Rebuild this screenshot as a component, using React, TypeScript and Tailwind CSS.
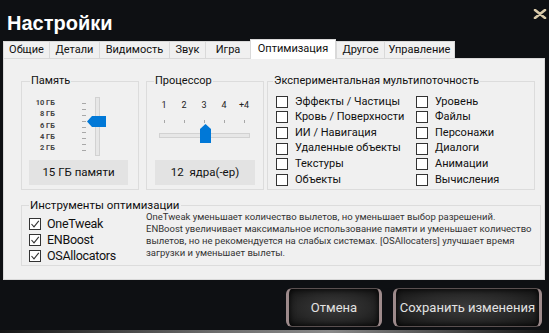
import React from 'react';

const tabs = [
  { label: 'Общие', w: 'w-[46px]' },
  { label: 'Детали', w: 'w-[50px]' },
  { label: 'Видимость', w: 'w-[70px]' },
  { label: 'Звук', w: 'w-[36px]' },
  { label: 'Игра', w: 'w-[45px]' },
  { label: 'Оптимизация', w: 'w-[86px]', active: true },
  { label: 'Другое', w: 'w-[48px]' },
  { label: 'Управление', w: 'w-[71px]' },
];

const leftThreads = ['Эффекты / Частицы', 'Кровь / Поверхности', 'ИИ / Навигация', 'Удаленные объекты', 'Текстуры', 'Объекты'];
const rightThreads = ['Уровень', 'Файлы', 'Персонажи', 'Диалоги', 'Анимации', 'Вычисления'];
const tools = ['OneTweak', 'ENBoost', 'OSAllocators'];

function Box({ checked }: { checked?: boolean }) {
  return (
    <span className="flex h-[12px] w-[12px] shrink-0 items-center justify-center border border-[#333] bg-white">
      {checked && (
        <svg width="10" height="10" viewBox="0 0 10 10">
          <path d="M1.5 5 L4 7.8 L8.8 1.8" fill="none" stroke="#333" strokeWidth="1.1" />
        </svg>
      )}
    </span>
  );
}

function ValueBox({ text }: { text: string }) {
  return (
    <div className="flex h-[25px] items-center justify-center bg-[#e3e3e3] text-[11.5px] text-[#111]">{text}</div>
  );
}

function StoneButton({ label, w }: { label: string; w: string }) {
  return (
    <div
      className={`${w} flex h-[39px] items-center justify-center rounded-[6px] border-x-[3px] border-y border-x-[#9d8a8b] border-y-[#5a5050] bg-[radial-gradient(ellipse_at_center,#3a3a3a_0%,#282828_55%,#141414_100%)] text-[13px] text-[#e2e2e2] shadow-[inset_0_0_6px_#000]`}
    >
      {label}
    </div>
  );
}

export default function App() {
  return (
    <div className="flex h-[333px] w-[549px] flex-col overflow-hidden bg-[#0e1013] font-['Roboto','Liberation_Sans',sans-serif]">
      {/* title */}
      <div className="flex h-[39px] items-start justify-between pl-[7px] pr-[2px]">
        <span className="mt-[10px] font-['Liberation_Sans',Arial,sans-serif] text-[20px] font-bold leading-[26px] text-white">
          Настройки
        </span>
        <svg className="mt-[9px]" width="14" height="10" viewBox="0 0 14 10">
          <path d="M2 1 L12 9 M12 1 L2 9" stroke="#d8c9a9" strokeWidth="2.6" strokeLinecap="round" />
        </svg>
      </div>

      {/* tabs */}
      <div className="flex h-[19px] items-end pl-[3px]">
        {tabs.map((t) =>
          t.active ? (
            <div
              key={t.label}
              className={`${t.w} -mb-px z-10 flex h-[20px] items-center justify-center border-x border-t border-[#d9d9d9] bg-white text-[11px] text-[#111]`}
            >
              {t.label}
            </div>
          ) : (
            <div
              key={t.label}
              className={`${t.w} flex h-[17px] items-center justify-center border-l border-t border-[#d9d9d9] bg-[#f0f0f0] text-[11px] text-[#111] last:border-r`}
            >
              {t.label}
            </div>
          )
        )}
      </div>

      {/* panel */}
      <div className="ml-[3px] h-[222px] w-[542px] border border-[#d9d9d9] bg-[#f0f0f0] pl-[17px] pt-[15px] text-[#111]">
        <div className="flex">
          {/* memory */}
          <fieldset className="h-[116px] w-[118px] border border-[#dcdcdc]">
            <legend className="ml-[8px] px-px text-[11px] leading-[14px]">Память</legend>
            <div className="mt-[9px] flex h-[60px]">
              <div className="ml-[8px] w-[25px] text-right text-[7.5px] font-bold leading-[11.3px] text-[#444]">
                <div>10 ГБ</div>
                <div>8 ГБ</div>
                <div>6 ГБ</div>
                <div>4 ГБ</div>
                <div>2 ГБ</div>
              </div>
              <div className="ml-[27px] flex w-[4px] flex-col gap-[4.9px] pt-[6px]">
                {Array.from({ length: 9 }).map((_, i) => (
                  <div key={i} className="h-px w-[4px] bg-[#a8a8a8]" />
                ))}
              </div>
              <div className="relative ml-[9px] h-[59px] w-[5px] border border-[#d2d2d2] bg-[#e7e7e7]">
                <svg className="absolute left-[-9px] top-[18px]" width="19" height="11" viewBox="0 0 19 11">
                  <path d="M0 5.5 L5 0 L19 0 L19 11 L5 11 Z" fill="#0078d7" />
                </svg>
              </div>
            </div>
            <div className="ml-[7px] mt-[3px] w-[99px]">
              <ValueBox text="15 ГБ памяти" />
            </div>
          </fieldset>

          {/* cpu */}
          <fieldset className="ml-[7px] h-[116px] w-[118px] border border-[#dcdcdc]">
            <legend className="ml-[7px] px-px text-[11px] leading-[14px]">Процессор</legend>
            <div className="ml-[7px] mt-[11px] flex text-[9px] leading-[12px] text-[#222]">
              {['1', '2', '3', '4', '+4'].map((n) => (
                <span key={n} className="w-[20px] text-center">
                  {n}
                </span>
              ))}
            </div>
            <div className="ml-[7px] mt-[9px] flex">
              {[0, 1, 2, 3, 4].map((i) => (
                <span key={i} className="flex w-[20px] justify-center">
                  <span className="h-[3px] w-px bg-[#a8a8a8]" />
                </span>
              ))}
            </div>
            <div className="relative ml-[12px] mt-[10px] h-[5px] w-[91px] border border-[#d2d2d2] bg-[#e7e7e7]">
              <svg className="absolute left-[40px] top-[-10px]" width="11" height="19" viewBox="0 0 11 19">
                <path d="M5.5 0 L11 5 L11 19 L0 19 L0 5 Z" fill="#0078d7" />
              </svg>
            </div>
            <div className="ml-[8px] mt-[22px] w-[100px]">
              <ValueBox text={'12\u00a0 ядра(-ер)'} />
            </div>
          </fieldset>

          {/* threads */}
          <fieldset className="ml-[3px] h-[116px] w-[268px] border border-[#dcdcdc]">
            <legend className="ml-[5px] px-px text-[11px] leading-[14px]">Экспериментальная мультипоточность</legend>
            <div className="ml-[8px] mt-[6px] flex">
              <div className="w-[140px]">
                {leftThreads.map((l) => (
                  <div key={l} className="flex h-[15.6px] items-center gap-[7px] text-[11px]">
                    <Box />
                    <span>{l}</span>
                  </div>
                ))}
              </div>
              <div>
                {rightThreads.map((l) => (
                  <div key={l} className="flex h-[15.6px] items-center gap-[7px] text-[11px]">
                    <Box />
                    <span>{l}</span>
                  </div>
                ))}
              </div>
            </div>
          </fieldset>
        </div>

        {/* tools */}
        <fieldset className="mt-[8px] h-[68px] w-[520px] border border-[#dcdcdc]">
          <legend className="ml-[7px] px-px text-[11.5px] leading-[14px]">Инструменты оптимизации</legend>
          <div className="flex items-start">
            <div className="ml-[7px] mt-[4px] w-[117px]">
              {tools.map((t) => (
                <div key={t} className="flex h-[16px] items-center gap-[6px] text-[12.5px] tracking-[-0.3px]">
                  <Box checked />
                  <span>{t}</span>
                </div>
              ))}
            </div>
            <p className="-mt-px text-[9.5px] leading-[12px] text-[#333]">
              OneTweak уменьшает количество вылетов, но уменьшает выбор разрешений.
              <br />
              ENBoost увеличивает максимальное использование памяти и уменьшает количество
              <br />
              вылетов, но не рекомендуется на слабых системах. [OSAllocaters] улучшает время
              <br />
              загрузки и уменьшает вылеты.
            </p>
          </div>
        </fieldset>
      </div>

      {/* buttons */}
      <div className="flex justify-end gap-[11px] pr-[7px] pt-[8px]">
        <StoneButton label="Отмена" w="w-[96px]" />
        <StoneButton label="Сохранить изменения" w="w-[149px]" />
      </div>
      <div className="mt-auto h-[3px] bg-[linear-gradient(to_right,#151515,#6e6e6e_40%,#8a8a8a_60%,#151515)]" />
    </div>
  );
}
